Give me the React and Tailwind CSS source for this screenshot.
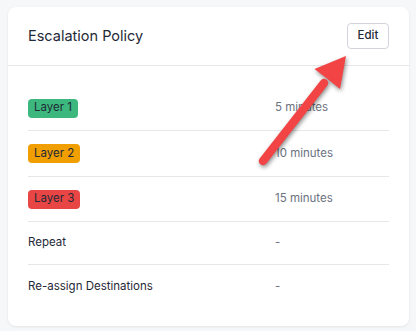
import React from 'react'

const rows = [
  { label: 'Layer 1', value: '5 minutes', badge: 'bg-[#3cb87e]', height: 'h-[45px]' },
  { label: 'Layer 2', value: '10 minutes', badge: 'bg-[#f09e00]', height: 'h-[46px]' },
  { label: 'Layer 3', value: '15 minutes', badge: 'bg-[#e84545]', height: 'h-[45px]' },
  { label: 'Repeat', value: '-', height: 'h-[43px]' },
  { label: 'Re-assign Destinations', value: '-', height: 'h-[44px]' },
]

function Arrow() {
  return (
    <svg
      className="absolute left-0 top-0 pointer-events-none"
      width="416"
      height="331"
      viewBox="0 0 416 331"
      style={{ filter: 'drop-shadow(1px 2px 2px rgba(0,0,0,0.45))' }}
    >
      <line x1="263" y1="161" x2="324" y2="83" stroke="#f24444" strokeWidth="8.5" strokeLinecap="round" />
      <polygon points="346,56 340,89 327.6,79 314.5,69" fill="#f24444" />
    </svg>
  )
}

export default function App() {
  return (
    <div className="relative w-[416px] h-[331px] bg-[#f6f7f9] pt-[7px] pl-2 pr-[7px] font-['Inter',sans-serif] overflow-hidden">
      <div className="bg-white rounded-lg shadow-[0_1px_3px_rgba(0,0,0,0.08)] h-[319px]">
        <div className="h-[59px] px-5 flex items-center justify-between border-b border-[#e5e7eb]">
          <h2 className="text-[14.5px] text-[#1f2937]">Escalation Policy</h2>
          <button
            type="button"
            className="w-[42px] h-[26px] text-[11.5px] font-medium text-[#1f2937] border border-[#d1d5db] rounded bg-white"
          >
            Edit
          </button>
        </div>
        <div className="px-5 pt-5">
          {rows.map((row, i) => (
            <div
              key={row.label}
              className={`grid grid-cols-[247px_1fr] items-center text-[11.5px] ${row.height} ${i < rows.length - 1 ? 'border-b border-[#e5e7eb]' : ''}`}
            >
              <div>
                {row.badge ? (
                  <span className={`inline-flex items-center h-[19px] px-[6px] rounded text-[#1f2937] ${row.badge}`}>
                    {row.label}
                  </span>
                ) : (
                  <span className="text-[#1f2937]">{row.label}</span>
                )}
              </div>
              <span className="text-[#6b7280]">{row.value}</span>
            </div>
          ))}
        </div>
      </div>
      <Arrow />
    </div>
  )
}
